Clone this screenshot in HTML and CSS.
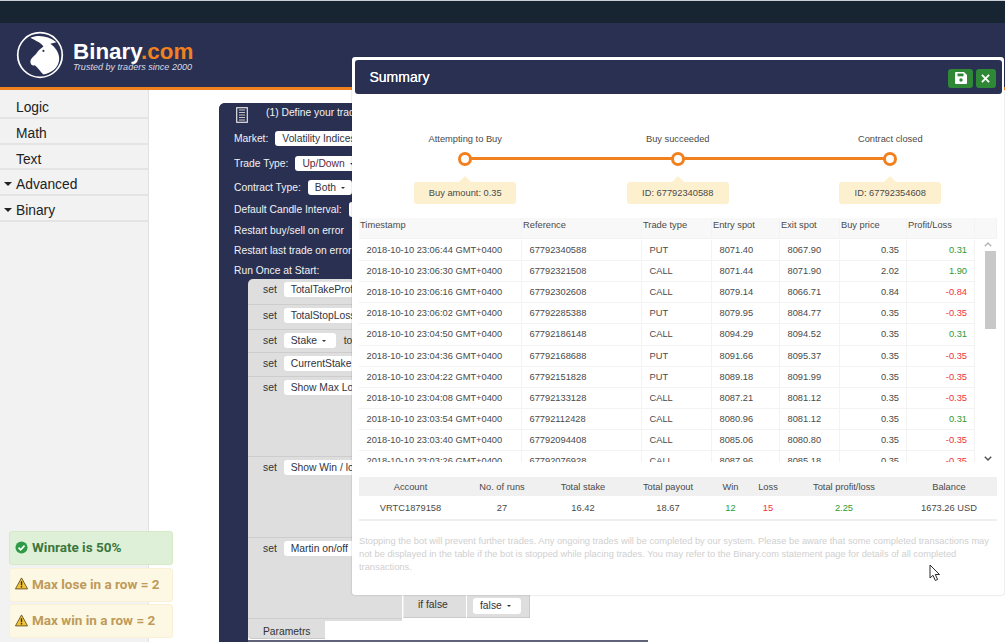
FILE: index.html
```html
<!DOCTYPE html>
<html lang="en">
<head>
<meta charset="utf-8">
<title>Binary Bot</title>
<link rel="stylesheet" href="styles.css">
</head>
<body>
<div class="topbar"></div>
<header class="header">
  <svg class="logo" viewBox="-70 -70 140 140" aria-hidden="true">
    <circle r="65" fill="none" stroke="#fff" stroke-width="5"/>
    <path fill="#fff" d="M-28-50C-5-60 25-55 48-37L30-33C46-22 56-6 56 10C56 35 35 52 10 57C2 50-5 38-15 30C-22 33-28 28-28 20C-28 10-18 5-10-5C-5-15 5-20 10-25C0-38-15-42-28-50Z"/>
    <circle cx="10" cy="-12" r="3" fill="#2a3052"/>
  </svg>
  <div class="brand">
    <div class="brand-name">Binary<span class="brand-com">.com</span></div>
    <div class="brand-tag">Trusted by traders since 2000</div>
  </div>
</header>
<div class="main">
  <nav class="sidebar">
    <div class="cat">Logic</div>
    <div class="cat">Math</div>
    <div class="cat">Text</div>
    <div class="cat"><span class="caret"></span>Advanced</div>
    <div class="cat"><span class="caret"></span>Binary</div>
  </nav>
</div>

<div class="block-dark">
  <div class="block-title">
    <svg class="book" viewBox="0 0 12 16" aria-hidden="true"><rect x="0.7" y="0.7" width="10.6" height="14.6" fill="none" stroke="#e4e4e4" stroke-width="1.2"/><path d="M3 3h6M3 5.5h6M3 8h6M3 10.500h6M3 13h6" stroke="#c8c8c8" stroke-width="1"/></svg>
    <span>(1) Define your trade contract</span>
  </div>
  <div class="field-row r-market">Market:<span class="field">Volatility Indices</span></div>
  <div class="field-row r-type">Trade Type:<span class="field"><span class="tint">Up/Down</span> <i class="tri"></i></span></div>
  <div class="field-row r-contract">Contract Type:<span class="field">Both <i class="tri"></i></span></div>
  <div class="field-row r-candle">Default Candle Interval:<span class="field">Default</span></div>
  <div class="field-row r-buy">Restart buy/sell on error</div>
  <div class="field-row r-last">Restart last trade on error</div>
  <div class="field-row r-run">Run Once at Start:</div>
  <div class="block-gray">
    <div class="set h26">set<span class="field">TotalTakeProfit</span></div>
    <div class="set h25">set<span class="field">TotalStopLoss</span></div>
    <div class="set h23">set<span class="field stake">Stake <i class="tri"></i></span><span class="to">to</span></div>
    <div class="set h24">set<span class="field">CurrentStake</span></div>
    <div class="set h80">set<span class="field">Show Max Lose</span></div>
    <div class="set h81">set<span class="field">Show Win / lose</span></div>
    <div class="set h81">set<span class="field">Martin on/off</span></div>
  </div>
  <div class="block-param">Parametrs</div>
  <div class="block-bottom"></div>
</div>
<div class="block-iffalse">
  <div class="if-label">if false</div>
  <div class="if-value"><span class="field">false <i class="tri"></i></span></div>
</div>

<div class="alerts">
  <div class="alert alert-ok">
    <svg class="alert-icon" viewBox="0 0 14 14" aria-hidden="true"><circle cx="7" cy="7" r="6.500" fill="#2f9a46"/><path d="M3.800 7.200l2.300 2.300 4.200-4.500" fill="none" stroke="#fff" stroke-width="1.800"/></svg>
    Winrate is 50%
  </div>
  <div class="alert alert-warn">
    <svg class="alert-icon" viewBox="0 0 14 14" aria-hidden="true"><path d="M7 1L13.500 12.800H.5Z" fill="#f0c53a" stroke="#6b5320" stroke-width="1" stroke-linejoin="round"/><path d="M7 4.500v4.300M7 9.800v1.500" stroke="#3a3010" stroke-width="1.500"/></svg>
    Max lose in a row = 2
  </div>
  <div class="alert alert-warn">
    <svg class="alert-icon" viewBox="0 0 14 14" aria-hidden="true"><path d="M7 1L13.500 12.800H.5Z" fill="#f0c53a" stroke="#6b5320" stroke-width="1" stroke-linejoin="round"/><path d="M7 4.500v4.300M7 9.800v1.500" stroke="#3a3010" stroke-width="1.500"/></svg>
    Max win in a row = 2
  </div>
</div>

<section class="modal">
  <div class="modal-title">
    <span class="modal-name">Summary</span>
    <button class="btn btn-save" aria-label="Save"><svg viewBox="0 0 12 12" width="12" height="12" aria-hidden="true"><path fill="#fff" d="M1 0H9L12 3V11a1 1 0 0 1-1 1H1a1 1 0 0 1-1-1V1a1 1 0 0 1 1-1Z"/><rect x="2.500" y="1.500" width="6" height="2.800" fill="#2e8836"/><circle cx="6" cy="8" r="1.700" fill="#2e8836"/></svg></button>
    <button class="btn btn-close" aria-label="Close"><svg viewBox="0 0 10 10" width="9" height="9" aria-hidden="true"><path d="M1 1L9 9M9 1L1 9" stroke="#fff" stroke-width="2"/></svg></button>
  </div>
  <div class="steps">
    <div class="step"><div class="step-label">Attempting to Buy</div><div class="dot"></div><div class="tip">Buy amount: 0.35</div></div>
    <div class="step"><div class="step-label">Buy succeeded</div><div class="dot"></div><div class="tip">ID: 67792340588</div></div>
    <div class="step"><div class="step-label">Contract closed</div><div class="dot"></div><div class="tip">ID: 67792354608</div></div>
  </div>
  <div class="trades">
    <div class="trow thead">
      <div>Timestamp</div><div>Reference</div><div>Trade type</div><div>Entry spot</div><div>Exit spot</div><div>Buy price</div><div>Profit/Loss</div><div></div>
    </div>
    <div class="tbody">
      <div class="rows">
        <div class="trow"><div>2018-10-10 23:06:44 GMT+0400</div><div>67792340588</div><div>PUT</div><div>8071.40</div><div>8067.90</div><div class="num">0.35</div><div class="num win">0.31</div></div>
        <div class="trow"><div>2018-10-10 23:06:30 GMT+0400</div><div>67792321508</div><div>CALL</div><div>8071.44</div><div>8071.90</div><div class="num">2.02</div><div class="num win">1.90</div></div>
        <div class="trow"><div>2018-10-10 23:06:16 GMT+0400</div><div>67792302608</div><div>CALL</div><div>8079.14</div><div>8066.71</div><div class="num">0.84</div><div class="num loss">-0.84</div></div>
        <div class="trow"><div>2018-10-10 23:06:02 GMT+0400</div><div>67792285388</div><div>PUT</div><div>8079.95</div><div>8084.77</div><div class="num">0.35</div><div class="num loss">-0.35</div></div>
        <div class="trow"><div>2018-10-10 23:04:50 GMT+0400</div><div>67792186148</div><div>CALL</div><div>8094.29</div><div>8094.52</div><div class="num">0.35</div><div class="num win">0.31</div></div>
        <div class="trow"><div>2018-10-10 23:04:36 GMT+0400</div><div>67792168688</div><div>PUT</div><div>8091.66</div><div>8095.37</div><div class="num">0.35</div><div class="num loss">-0.35</div></div>
        <div class="trow"><div>2018-10-10 23:04:22 GMT+0400</div><div>67792151828</div><div>PUT</div><div>8089.18</div><div>8091.99</div><div class="num">0.35</div><div class="num loss">-0.35</div></div>
        <div class="trow"><div>2018-10-10 23:04:08 GMT+0400</div><div>67792133128</div><div>CALL</div><div>8087.21</div><div>8081.12</div><div class="num">0.35</div><div class="num loss">-0.35</div></div>
        <div class="trow"><div>2018-10-10 23:03:54 GMT+0400</div><div>67792112428</div><div>CALL</div><div>8080.96</div><div>8081.12</div><div class="num">0.35</div><div class="num win">0.31</div></div>
        <div class="trow"><div>2018-10-10 23:03:40 GMT+0400</div><div>67792094408</div><div>CALL</div><div>8085.06</div><div>8080.80</div><div class="num">0.35</div><div class="num loss">-0.35</div></div>
        <div class="trow"><div>2018-10-10 23:03:26 GMT+0400</div><div>67792076928</div><div>CALL</div><div>8087.96</div><div>8085.18</div><div class="num">0.35</div><div class="num loss">-0.35</div></div>
      </div>
      <div class="scrollbar">
        <svg class="arrow" viewBox="0 0 8 5" aria-hidden="true"><path d="M.8 4.200L4 1L7.200 4.200" fill="none" stroke="#b4b4b4" stroke-width="1.400"/></svg>
        <div class="thumb"></div>
        <svg class="arrow arrow-down" viewBox="0 0 8 5" aria-hidden="true"><path d="M.8.8L4 4L7.200.8" fill="none" stroke="#505050" stroke-width="1.400"/></svg>
      </div>
    </div>
  </div>
  <div class="stats">
    <div class="srow shead"><div>Account</div><div>No. of runs</div><div>Total stake</div><div>Total payout</div><div>Win</div><div>Loss</div><div>Total profit/loss</div><div>Balance</div></div>
    <div class="srow sbody"><div>VRTC1879158</div><div>27</div><div>16.42</div><div>18.67</div><div class="win">12</div><div class="loss">15</div><div class="win">2.25</div><div>1673.26 USD</div></div>
  </div>
  <p class="note">Stopping the bot will prevent further trades. Any ongoing trades will be completed by our system. Please be aware that some completed transactions may not be displayed in the table if the bot is stopped while placing trades. You may refer to the Binary.com statement page for details of all completed transactions.</p>
</section>

<svg class="cursor" viewBox="0 0 12 18" aria-hidden="true"><path d="M1 1V14L4 11.300L6.300 16.500L8.600 15.500L6.300 10.500H10.500Z" fill="#fff" stroke="#2a2a2a" stroke-width="1"/></svg>
</body>
</html>
```
FILE: styles.css
```css
* { box-sizing: border-box; }
html, body { margin: 0; height: 100%; overflow: hidden; }
body {
  width: 1005px;
  height: 642px;
  position: relative;
  background: #fff;
  font-family: "Liberation Sans", Arial, sans-serif;
  color: #3a3a3a;
  display: flex;
  flex-direction: column;
}

/* page chrome */
.topbar { height: 23px; flex: none; background: #172431; border-top: 1px solid #c9ced2; }
.header {
  height: 67px;
  flex: none;
  background: #2a3052;
  border-bottom: 3px solid #f1811f;
  display: flex;
  align-items: flex-start;
  padding: 8px 0 0 16px;
  gap: 9px;
}
.logo { width: 48px; height: 48px; flex: none; }
.brand { padding-top: 9px; color: #fff; }
.brand-name { font-size: 22.400px; font-weight: 700; line-height: 24px; }
.brand-com { color: #f1811f; }
.brand-tag { font-size: 9.050px; font-style: italic; line-height: 11px; margin-top: -2px; color: #d8dae2; }

.main { flex: 1; display: flex; min-height: 0; }
.sidebar { width: 149px; background: #f2f2f2; border-right: 1px solid #e2e2e2; padding-top: 3px; }
.cat {
  height: 25.800px;
  padding-left: 16px;
  font-size: 13.800px;
  line-height: 29px;
  color: #222;
  border-bottom: 2px solid #e4e4e4;
  position: relative;
}
.caret {
  position: absolute;
  left: 4px;
  top: 12px;
  border-left: 4px solid transparent;
  border-right: 4px solid transparent;
  border-top: 4px solid #222;
}

/* blockly canvas */
.block-dark {
  position: absolute;
  left: 219px;
  top: 103px;
  width: 29px;
  height: 539px;
  background: #2a3052;
  border-radius: 6px 0 0 0;
  color: #f2f2f2;
  font-size: 10.300px;
}
.block-dark::before {
  content: "";
  position: absolute;
  left: 0;
  top: 0;
  width: 134px;
  height: 190px;
  background: #2a3052;
  border-radius: 6px 0 0 0;
}
.block-title { position: absolute; left: 17px; top: 4px; display: flex; gap: 18px; line-height: 11px; white-space: nowrap; }
.book { width: 12px; height: 16px; flex: none; }
.field-row { position: absolute; left: 15px; display: flex; align-items: center; gap: 7px; line-height: 15px; white-space: nowrap; }
.r-market { top: 28px; }
.r-type { top: 53px; }
.r-contract { top: 77px; }
.r-candle { top: 99px; }
.r-buy { top: 120px; }
.r-last { top: 140px; }
.r-run { top: 160px; }
.field {
  display: inline-block;
  height: 15px;
  line-height: 15px;
  padding: 0 7px;
  background: #fff;
  border-radius: 3px;
  color: #2f3340;
  font-size: 10.300px;
  white-space: nowrap;
}
.stake { width: 52px; }
.tint { color: #5a2a3a; }
.tri {
  display: inline-block;
  vertical-align: 2px;
  margin-left: 2px;
  border-left: 2px solid transparent;
  border-right: 2px solid transparent;
  border-top: 2.500px solid #333;
}
.block-gray {
  position: absolute;
  left: 29px;
  top: 176px;
  width: 154px;
  height: 342px;
  background: #dedede;
  border-radius: 5px 0 0 0;
  color: #333;
}
.set {
  display: flex;
  align-items: flex-start;
  gap: 7px;
  padding: 3px 0 0 15px;
  border-bottom: 1px solid #cdcdcd;
  line-height: 15px;
  white-space: nowrap;
}
.to { margin-left: 1px; }
.h26 { height: 26px; }
.h25 { height: 25px; }
.h23 { height: 23px; }
.h24 { height: 24px; }
.h80 { height: 80px; }
.h81 { height: 81px; }
.block-param {
  position: absolute;
  left: 29px;
  top: 518px;
  width: 77px;
  height: 18px;
  padding: 3px 0 0 15px;
  background: #dedede;
  color: #333;
  line-height: 16px;
  border-bottom: 1px solid #cacaca;
  border-radius: 0 0 0 4px;
}
.block-bottom { position: absolute; left: 29px; width: 400px; bottom: 0; height: 2px; background: #5f6278; }
.block-iffalse {
  position: absolute;
  left: 403px;
  top: 595px;
  display: flex;
  font-size: 10.300px;
  color: #333;
}
.if-label { width: 63px; height: 23px; background: #dedede; padding: 2px 0 0 14px; line-height: 16px; border-bottom: 1px solid #cacaca; border-left: 1px solid #ececec; }
.if-value { width: 63px; height: 23px; margin-left: 1px; background: #dedede; padding: 3px 0 0 6px; border-bottom: 1px solid #cacaca; border-right: 1px solid #cacaca; }
.if-value .field { padding: 0 7px; height: 16px; width: 48px; }

/* alerts */
.alerts { position: absolute; left: 9px; top: 531px; width: 164px; display: flex; flex-direction: column; gap: 2.500px; }
.alert {
  height: 34px;
  border: 1px solid;
  border-radius: 3px;
  display: flex;
  align-items: center;
  gap: 4px;
  padding: 0 0 2px 5px;
  font-family: Roboto, sans-serif;
  font-weight: 700;
  font-size: 13.500px;
}
.alert-ok { background: #dff0d8; border-color: #d6e9c6; color: #3c763d; }
.alert-warn { background: #fcf8e3; border-color: #faf0d6; color: #bf9a5a; }
.alert-icon { width: 13px; height: 13px; flex: none; }

/* summary modal */
.modal {
  position: absolute;
  left: 352px;
  top: 57px;
  width: 652px;
  height: 538px;
  background: #fff;
  border-radius: 3px;
  box-shadow: 0 0 2px rgba(0, 0, 0, .25);
  padding: 3px 2.500px 0 3px;
  font-size: 9.300px;
  color: #4a4a4a;
}
.modal-title {
  height: 34px;
  background: #2a3052;
  border-radius: 3px;
  display: flex;
  align-items: center;
  gap: 2.500px;
  padding: 2px 6px 0 14.500px;
}
.modal-name { flex: 1; color: #fff; font-size: 14px; margin-top: -3px; text-shadow: 0 0 .4px #fff; }
.btn {
  height: 19px;
  border: 0;
  border-radius: 3px;
  background: #2e8836;
  padding: 0;
  display: flex;
  align-items: center;
  justify-content: center;
}
.btn-save { width: 25px; }
.btn-close { width: 20px; }

.steps {
  display: grid;
  grid-template-columns: repeat(3, 212.500px);
  margin: 39px 0 0 4px;
  height: 85px;
  position: relative;
}
.steps::before {
  content: "";
  position: absolute;
  left: 106px;
  top: 24px;
  width: 425px;
  height: 3px;
  background: #f1811f;
}
.step { position: relative; display: flex; flex-direction: column; align-items: center; font-size: 9.300px; }
.step-label { line-height: 12px; height: 19px; }
.dot { width: 14px; height: 14px; flex: none; border: 3px solid #f1811f; border-radius: 50%; background: #fff; position: relative; }
.tip {
  position: relative;
  margin-top: 16px;
  width: 102px;
  height: 22px;
  flex: none;
  line-height: 22px;
  text-align: center;
  background: #fdf0cf;
  border-radius: 3px;
}
.tip::before {
  content: "";
  position: absolute;
  left: 45px;
  top: -6px;
  border-left: 6px solid transparent;
  border-right: 6px solid transparent;
  border-bottom: 6px solid #fdf0cf;
}

.trades { margin-left: 4px; width: 638px; }
.trow {
  display: grid;
  grid-template-columns: 163px 120px 70px 68px 60px 67px 68px;
  height: 21.200px;
  line-height: 21.200px;
  border-bottom: 1px solid #f3f3f3;
  white-space: nowrap;
}
.trow > div { padding: 0 7px 0 7.500px; border-right: 1px solid #f3f3f3; overflow: hidden; }
.trow > .num { text-align: right; }
.thead { grid-template-columns: 163px 120px 70px 68px 60px 67px 68px 22px; height: 21px; background: #f8f8f8; line-height: 14px; }
.thead > div { padding: 0 0 0 1px; }
.win { color: #2c9a34; }
.loss { color: #f0323a; }
.tbody { display: flex; height: 223px; overflow: hidden; background: #fff; }
.rows { width: 616px; flex: none; padding-top: .6px; }
.scrollbar { width: 22px; position: relative; display: flex; flex-direction: column; align-items: center; padding: 3px 0 0 0; }
.arrow { width: 8px; height: 5px; flex: none; margin-left: 4px; }
.thumb { width: 11px; height: 78px; background: #c8c8c8; margin: 4px 0 0 8px; flex: none; }
.arrow-down { margin-top: auto; margin-bottom: 1px; }

.stats { margin: 15px 0 0 4px; width: 638px; border-bottom: 2px solid #efefef; }
.srow {
  display: grid;
  grid-template-columns: 103px 80px 82px 88px 37px 38px 114px 96px;
  text-align: center;
  align-items: center;
}
.shead { height: 19px; background: #f0f0f0; }
.sbody { height: 23px; }
.note {
  margin: 14px 0 0 4px;
  width: 640px;
  font-size: 9.300px;
  line-height: 12.800px;
  color: #d0d0d0;
}

.cursor { position: absolute; left: 929px; top: 564px; width: 12px; height: 18px; }
```
